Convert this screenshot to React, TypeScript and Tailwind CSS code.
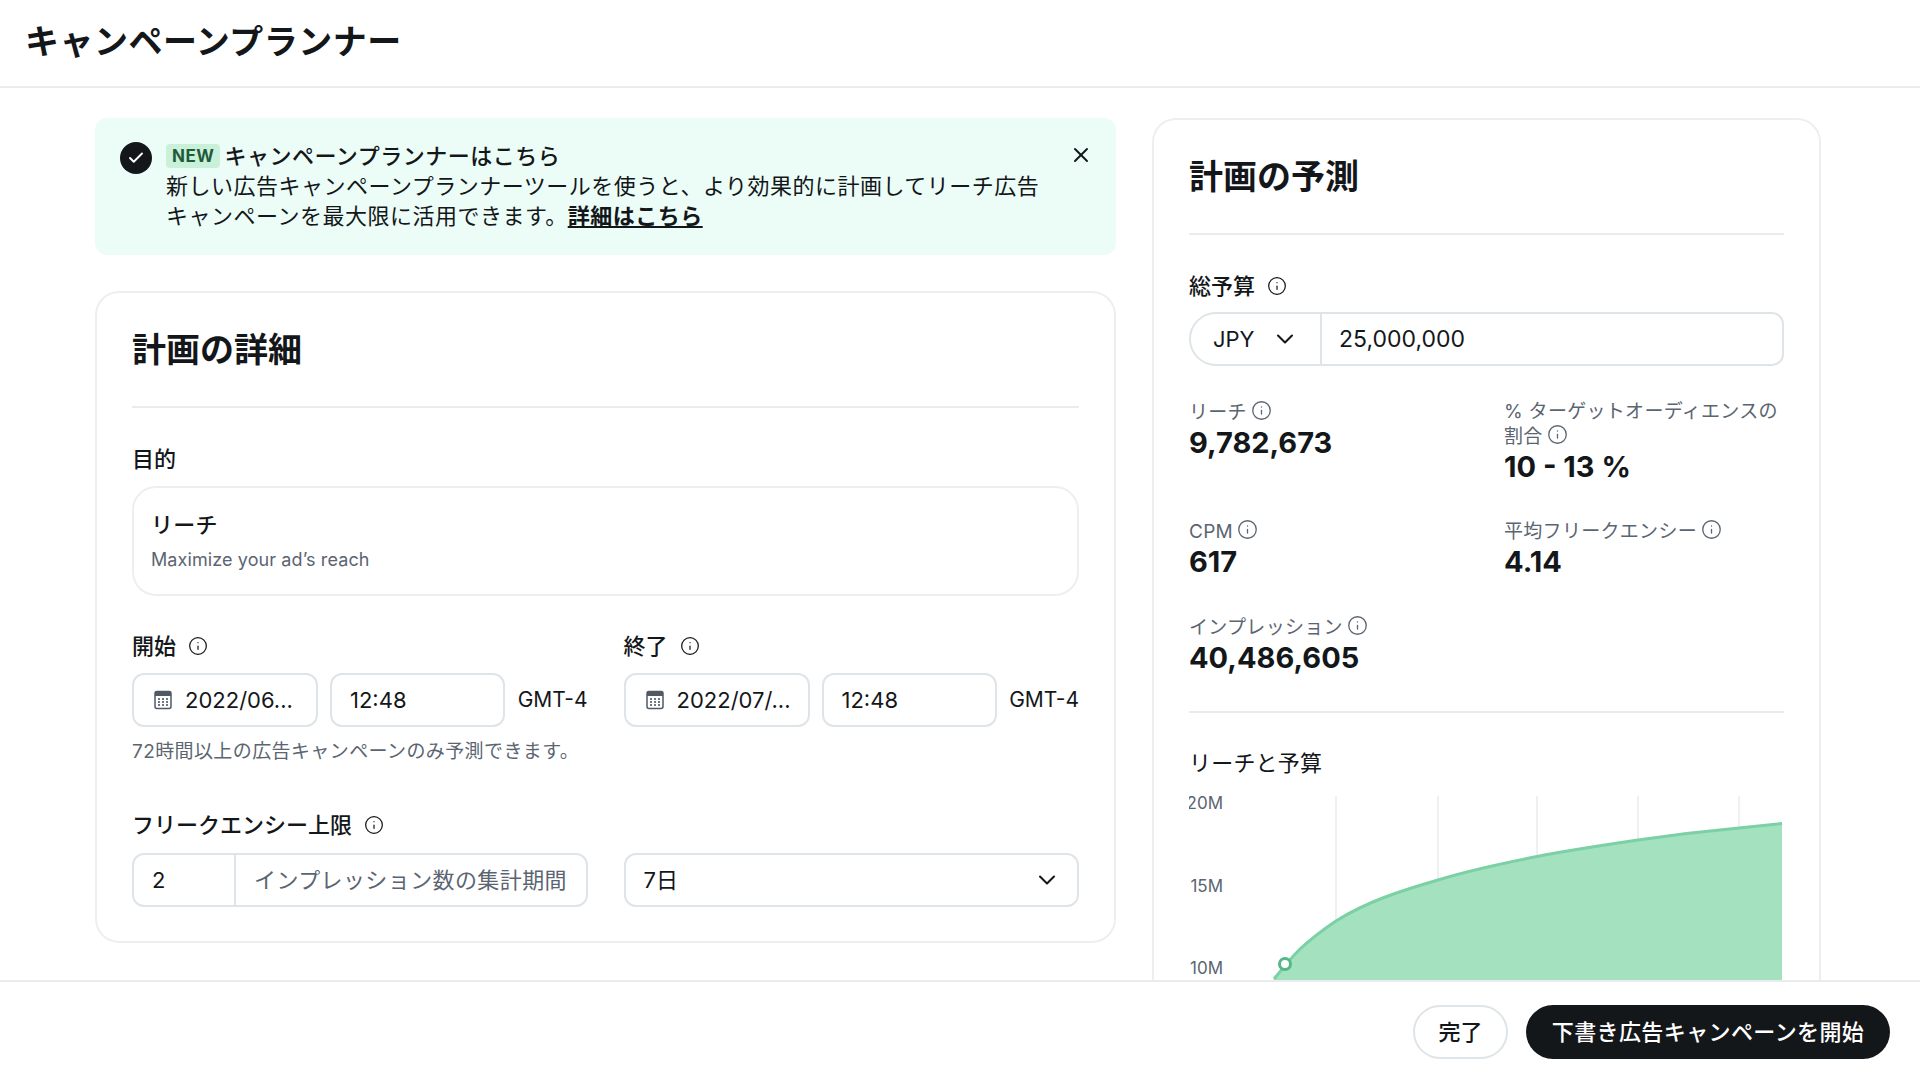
import React from "react"
import { Check, ChevronDown, Info, X } from "lucide-react"

const font = "[font-family:Inter,'Noto_Sans_CJK_JP',sans-serif]"

function CalendarIcon() {
  return (
    <svg width="20" height="20" viewBox="0 0 20 20" className="shrink-0">
      <rect x="2" y="1.5" width="16" height="17" rx="2" fill="#fff" stroke="#4f5a65" strokeWidth="1.5" />
      <rect x="2" y="1.5" width="16" height="4.5" fill="#4f5a65" />
      {[6, 10, 14].map((x) => [9, 12, 15].map((y) => (
        <rect key={`${x}-${y}`} x={x - 0.9} y={y - 0.9} width="1.8" height="1.8" fill="#4f5a65" />
      )))}
    </svg>
  )
}

function Label({ children }: { children: React.ReactNode }) {
  return (
    <div className="flex items-center gap-3 h-8 text-[22px] font-medium text-[#14171a]">
      <span>{children}</span>
      <Info className="w-5 h-5 text-[#14171a]" strokeWidth={1.5} />
    </div>
  )
}

function DateTime({ date }: { date: string }) {
  return (
    <div className="flex items-center gap-3 text-[22px] text-[#14171a] whitespace-nowrap">
      <div className="w-[186px] shrink-0 h-[54px] flex items-center gap-[12px] pl-[19px] border-2 border-[#dfe4e8] rounded-xl">
        <CalendarIcon />
        <span>{date}</span>
      </div>
      <div className="w-[175px] shrink-0 h-[54px] flex items-center pl-[18px] border-2 border-[#dfe4e8] rounded-xl">12:48</div>
      <span className="ml-auto text-[21px]">GMT-4</span>
    </div>
  )
}

function Stat({ label, value, className }: { label: React.ReactNode; value: string; className?: string }) {
  return (
    <div className={className}>
      <div className="text-[19px] leading-[24px] tracking-[0.3px] text-[#5b6571]">{label}</div>
      <div className="mt-[-1px] text-[29px] leading-[38px] font-bold text-[#14171a]">{value}</div>
    </div>
  )
}

function Tip() {
  return <Info className="inline-block align-[-2px] ml-1 w-[21px] h-[21px] text-[#5b6571]" strokeWidth={1.5} />
}

function Chart() {
  const curve = "M1274 980 C1282 970 1290 960 1300 950 C1312 939 1324 930 1336 922 C1366 903 1400 892 1438 881 C1470 871 1504 864 1537 857.5 C1570 851 1604 846 1638 841 C1672 836 1706 832 1739 829 L1782 824.5"
  return (
    <svg width="594" height="290" viewBox="1189 790 594 290" className="block mt-[11px]">
      {[1336, 1438, 1537, 1638, 1739].map((x) => (
        <line key={x} x1={x} x2={x} y1="797" y2="1080" stroke="#e8ebee" strokeWidth="1.5" />
      ))}
      <path d={`${curve} L1782 1080 L1274 1080 Z`} fill="#a3e1bf" />
      <path d={curve} fill="none" stroke="#7bd0a4" strokeWidth="3" />
      <circle cx="1285" cy="965" r="5.5" fill="#fff" stroke="#55b886" strokeWidth="3" />
      <g fontSize="17" fill="#5b6571" textAnchor="end">
        <text x="1223" y="810">20M</text>
        <text x="1223" y="893">15M</text>
        <text x="1223" y="975">10M</text>
      </g>
    </svg>
  )
}

export default function App() {
  return (
    <div className={`${font} h-[1075px] flex flex-col overflow-hidden bg-white`}>
      <header className="h-[88px] shrink-0 flex items-center pl-[25px] pb-[3px] border-b-2 border-[#e9ecee]">
        <h1 className="text-[34px] font-bold tracking-[0.5px] text-[#14171a]">キャンペーンプランナー</h1>
      </header>

      <main className="flex-1 min-h-0 overflow-hidden flex gap-9 pl-[95px] pt-[30px]">
        <div className="w-[1021px] shrink-0 flex flex-col gap-[36px]">
          <div className="h-[137px] flex gap-[14px] pl-[25px] pr-[23px] pt-[23px] bg-[#ecfdf7] rounded-xl text-[22px] leading-[30px] text-[#14171a]">
            <div className="w-8 h-8 mt-[1px] shrink-0 rounded-full bg-[#14171a] flex items-center justify-center">
              <Check className="w-[18px] h-[18px] text-white" strokeWidth={2.5} />
            </div>
            <div className="flex-1 tracking-[0.5px]">
              <div className="flex items-center gap-[4px] font-medium">
                <span className="h-[24px] px-[6px] flex items-center rounded bg-[#c9f0d9] text-[17px] font-bold text-[#1f5a3a]">NEW</span>
                <span>キャンペーンプランナーはこちら</span>
              </div>
              <p>
                新しい広告キャンペーンプランナーツールを使うと、より効果的に計画してリーチ広告キャンペーンを最大限に活用できます。
                <a className="font-bold underline">詳細はこちら</a>
              </p>
            </div>
            <X className="w-6 h-6 shrink-0 mt-[2px]" strokeWidth={2} />
          </div>

          <section className="border-2 border-[#eceff1] rounded-[24px] px-[35px] pb-[34px]">
            <div className="h-[115px] flex items-center border-b-2 border-[#e9ecee]">
              <h2 className="text-[34px] font-bold text-[#14171a]">計画の詳細</h2>
            </div>
            <div className="mt-[35px] h-8 flex items-center text-[22px] font-medium text-[#14171a]">目的</div>
            <div className="mt-[11px] h-[110px] pl-[17px] pr-[18px] flex flex-col justify-center gap-[8px] border-2 border-[#eceff1] rounded-[24px]">
              <div className="text-[22px] leading-[30px] font-medium tracking-[0.3px] text-[#14171a]">リーチ</div>
              <div className="text-[18px] leading-[24px] tracking-[0.1px] text-[#5b6571]">Maximize your ad’s reach</div>
            </div>

            <div className="mt-[34px] grid grid-cols-2 gap-x-9">
              <div>
                <Label>開始</Label>
                <div className="mt-[11px]"><DateTime date="2022/06..." /></div>
              </div>
              <div>
                <Label>終了</Label>
                <div className="mt-[11px]"><DateTime date="2022/07/..." /></div>
              </div>
            </div>
            <p className="mt-[12px] text-[19px] leading-[26px] tracking-[0.4px] text-[#5b6571]">72時間以上の広告キャンペーンのみ予測できます。</p>

            <div className="mt-[44px]"><Label>フリークエンシー上限</Label></div>
            <div className="mt-[12px] grid grid-cols-2 gap-x-9 text-[22px]">
              <div className="h-[54px] flex border-2 border-[#dfe4e8] rounded-xl">
                <div className="w-[102px] flex items-center pl-[18px] border-r-2 border-[#dfe4e8] text-[#14171a]">2</div>
                <div className="flex-1 flex items-center pl-[18px] tracking-[0.4px] text-[#5b6571]">インプレッション数の集計期間</div>
              </div>
              <div className="h-[54px] flex items-center justify-between pl-[18px] pr-[16px] border-2 border-[#dfe4e8] rounded-xl text-[#14171a]">
                <span>7日</span>
                <ChevronDown className="w-7 h-7" strokeWidth={1.75} />
              </div>
            </div>
          </section>
        </div>

        <section className="w-[669px] shrink-0 self-start border-2 border-[#eceff1] rounded-[24px] px-[35px] pb-[34px]">
          <div className="h-[115px] flex items-center border-b-2 border-[#e9ecee]">
            <h2 className="text-[34px] font-bold text-[#14171a]">計画の予測</h2>
          </div>
          <div className="mt-[35px]"><Label>総予算</Label></div>
          <div className="mt-[10px] h-[54px] flex border-2 border-[#dfe4e8] rounded-l-[27px] rounded-r-xl text-[22px] text-[#14171a]">
            <div className="w-[131px] flex items-center justify-between pl-[22px] pr-[21px] border-r-2 border-[#dfe4e8]">
              <span>JPY</span>
              <ChevronDown className="w-7 h-7" strokeWidth={1.75} />
            </div>
            <div className="flex-1 flex items-center pl-[17px] text-[23px]">25,000,000</div>
          </div>

          <div className="mt-[34px] grid grid-cols-[315px_1fr]">
            <Stat label={<>リーチ<Tip /></>} value="9,782,673" className="h-[119px]" />
            <Stat label={<>% ターゲットオーディエンスの割合<Tip /></>} value="10 - 13 %" className="h-[119px]" />
            <Stat label={<>CPM<Tip /></>} value="617" className="h-[96px]" />
            <Stat label={<>平均フリークエンシー<Tip /></>} value="4.14" className="h-[96px]" />
            <Stat label={<>インプレッション<Tip /></>} value="40,486,605" />
          </div>

          <div className="mt-[34px] border-b-2 border-[#e9ecee]" />
          <div className="mt-[35px] text-[22px] leading-[30px] tracking-[0.2px] text-[#14171a]">リーチと予算</div>
          <Chart />
        </section>
      </main>

      <footer className="h-[95px] shrink-0 flex items-start justify-end gap-[18px] pt-[23px] pr-[30px] border-t-2 border-[#e9ecee] bg-white">
        <button className="w-[95px] h-[54px] rounded-full border-2 border-[#dfe4e8] text-[22px] font-medium text-[#14171a]">完了</button>
        <button className="w-[364px] h-[54px] rounded-full bg-[#14171a] text-[22px] font-medium tracking-[0.4px] text-white">下書き広告キャンペーンを開始</button>
      </footer>
    </div>
  )
}
